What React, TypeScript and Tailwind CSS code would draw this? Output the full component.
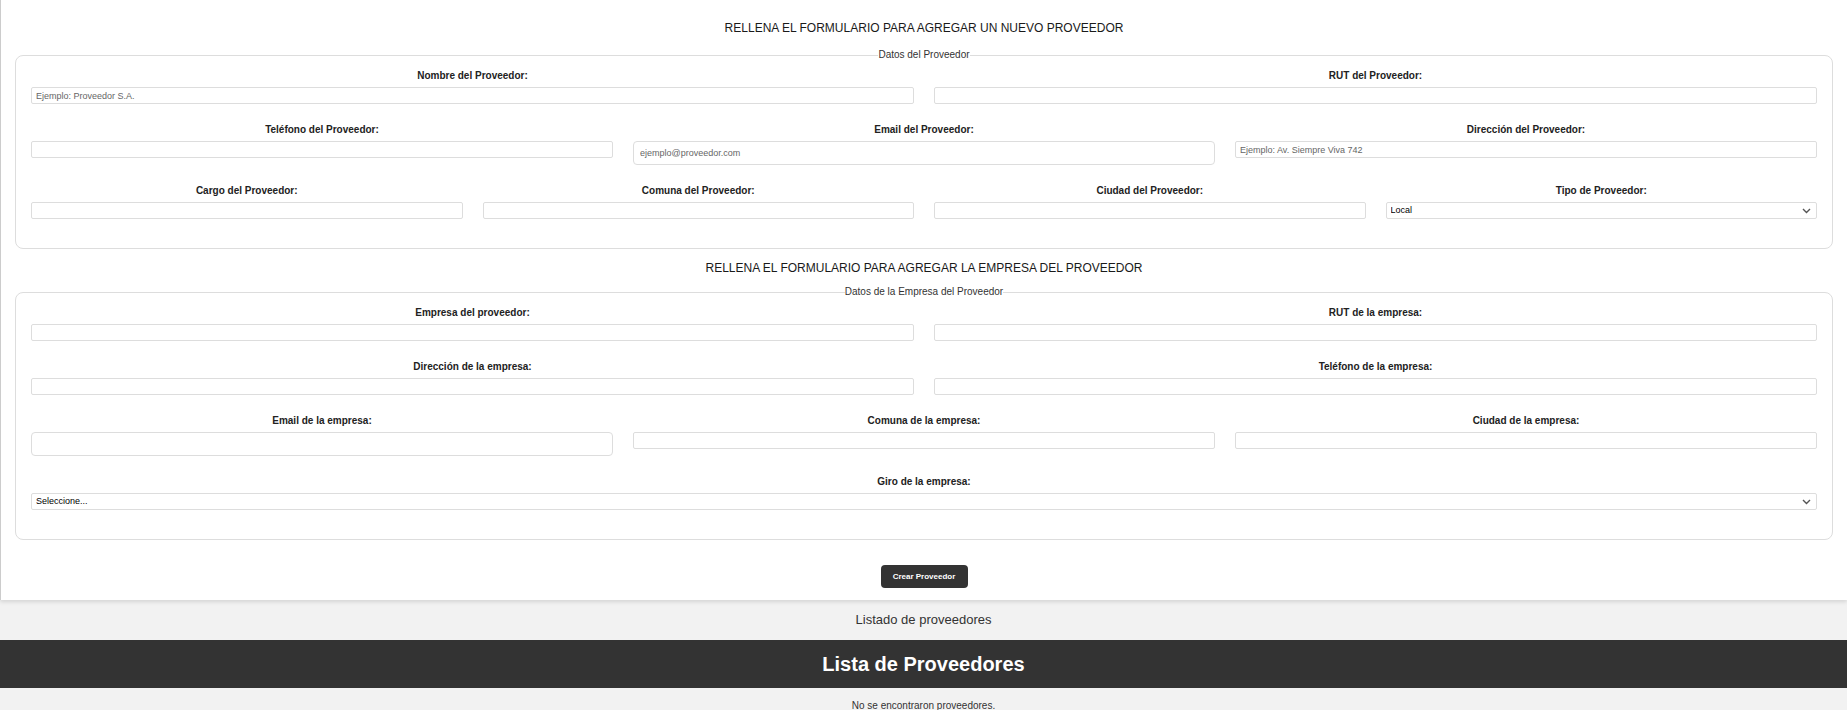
import React from "react";

type FieldDef = {
  label: string;
  placeholder?: string;
  tall?: boolean;
  options?: string[];
};

const proveedorRows: FieldDef[][] = [
  [
    { label: "Nombre del Proveedor:", placeholder: "Ejemplo: Proveedor S.A." },
    { label: "RUT del Proveedor:" },
  ],
  [
    { label: "Teléfono del Proveedor:" },
    { label: "Email del Proveedor:", placeholder: "ejemplo@proveedor.com", tall: true },
    { label: "Dirección del Proveedor:", placeholder: "Ejemplo: Av. Siempre Viva 742" },
  ],
  [
    { label: "Cargo del Proveedor:" },
    { label: "Comuna del Proveedor:" },
    { label: "Ciudad del Proveedor:" },
    { label: "Tipo de Proveedor:", options: ["Local", "Nacional", "Internacional"] },
  ],
];

const empresaRows: FieldDef[][] = [
  [{ label: "Empresa del proveedor:" }, { label: "RUT de la empresa:" }],
  [{ label: "Dirección de la empresa:" }, { label: "Teléfono de la empresa:" }],
  [
    { label: "Email de la empresa:", tall: true },
    { label: "Comuna de la empresa:" },
    { label: "Ciudad de la empresa:" },
  ],
  [{ label: "Giro de la empresa:", options: ["Seleccione..."] }],
];

const Field = ({ field }: { field: FieldDef }) => {
  return (
    <div className="flex-1 flex flex-col min-w-0">
      <label className="text-[10px] leading-[12px] font-bold text-[#222] text-center mb-[5px]">
        {field.label}
      </label>
      {field.options ? (
        <div className="relative h-[17px]">
          <select className="block w-full h-[17px] appearance-none border border-[#ddd] rounded-[2px] bg-white pl-[4px] text-[9px] leading-[15px] text-black outline-none">
            {field.options.map((o) => (
              <option key={o}>{o}</option>
            ))}
          </select>
          <svg
            className="absolute right-[6px] top-[6px] pointer-events-none"
            width="9"
            height="6"
            viewBox="0 0 9 6"
            fill="none"
          >
            <path d="M1 1l3.5 3.5L8 1" stroke="#555" strokeWidth="1.4" />
          </svg>
        </div>
      ) : field.tall ? (
        <input
          type="text"
          placeholder={field.placeholder}
          className="block w-full h-[24px] border border-[#ddd] rounded-[4px] px-[6px] text-[9px] text-[#333] placeholder:text-[#666] outline-none"
        />
      ) : (
        <input
          type="text"
          placeholder={field.placeholder}
          className="block w-full h-[17px] border border-[#ddd] rounded-[2px] px-[4px] text-[9px] text-[#333] placeholder:text-[#666] outline-none"
        />
      )}
    </div>
  );
};

const FormSection = ({ legend, rows }: { legend: string; rows: FieldDef[][] }) => {
  return (
    <fieldset className="border border-[#ddd] rounded-[8px] px-[15px] pt-[9px] pb-[29px]">
      <legend className="mx-auto px-0 text-[10px] leading-[12px] text-[#333]">{legend}</legend>
      <div className="flex flex-col gap-[20px]">
        {rows.map((row, i) => (
          <div key={i} className="flex gap-[20px] items-start">
            {row.map((f) => (
              <Field key={f.label} field={f} />
            ))}
          </div>
        ))}
      </div>
    </fieldset>
  );
};

export default function App() {
  return (
    <div className="min-h-screen bg-[#f2f2f2] font-['Liberation_Sans',Arial,sans-serif]">
      <div className="bg-white border-l border-[#ccc] px-[14px] pt-[21px] pb-[12px] shadow-[0_2px_4px_rgba(0,0,0,0.12)]">
        <h2 className="text-[12px] leading-[14px] text-[#1a1a1a] text-center mb-[14px]">
          RELLENA EL FORMULARIO PARA AGREGAR UN NUEVO PROVEEDOR
        </h2>
        <FormSection legend="Datos del Proveedor" rows={proveedorRows} />
        <h2 className="text-[12px] leading-[14px] text-[#1a1a1a] text-center mt-[12px] mb-[11px]">
          RELLENA EL FORMULARIO PARA AGREGAR LA EMPRESA DEL PROVEEDOR
        </h2>
        <FormSection legend="Datos de la Empresa del Proveedor" rows={empresaRows} />
        <div className="flex justify-center mt-[25px]">
          <button className="block w-[87px] h-[23px] bg-[#333] text-white text-[8px] font-bold rounded-[4px]">
            Crear Proveedor
          </button>
        </div>
      </div>
      <p className="text-[13px] leading-[16px] text-[#333] text-center mt-[12px] mb-[12px]">
        Listado de proveedores
      </p>
      <div className="bg-[#333] h-[48px] flex items-center justify-center">
        <h1 className="text-[20px] font-bold text-white">Lista de Proveedores</h1>
      </div>
      <p className="text-[10px] leading-[12px] text-[#333] text-center mt-[12px]">
        No se encontraron proveedores.
      </p>
    </div>
  );
}
